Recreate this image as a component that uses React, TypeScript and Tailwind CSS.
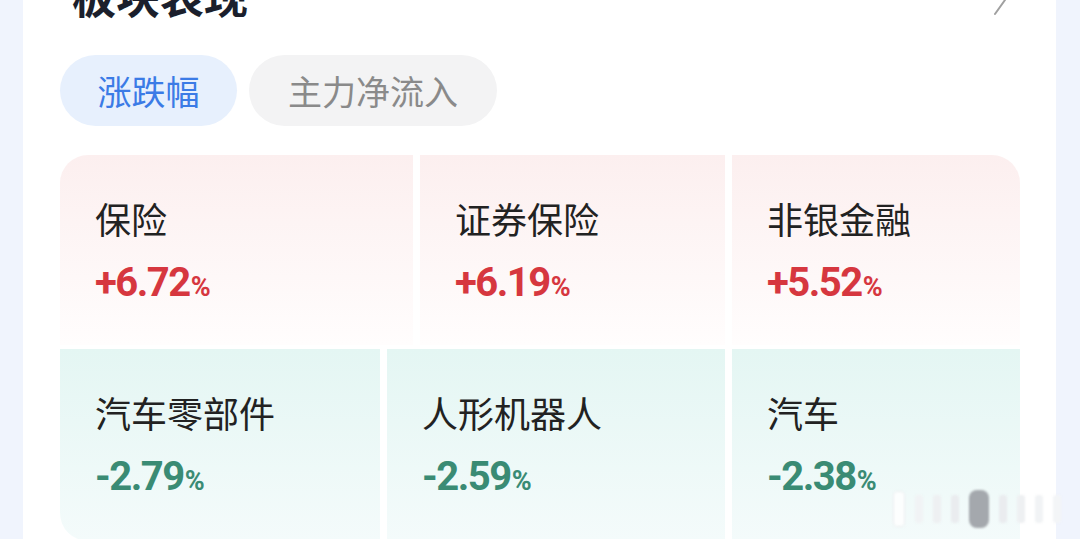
type Sector = { name: string; change: string; width: string; corner?: string }

const gainers: Sector[] = [
  { name: "保险", change: "+6.72", width: "w-[353px]", corner: "rounded-tl-[28px]" },
  { name: "证券保险", change: "+6.19", width: "w-[305px]" },
  { name: "非银金融", change: "+5.52", width: "w-[288px]", corner: "rounded-tr-[28px]" },
]

const losers: Sector[] = [
  { name: "汽车零部件", change: "-2.79", width: "w-[320px]", corner: "rounded-bl-[28px]" },
  { name: "人形机器人", change: "-2.59", width: "w-[338px]" },
  { name: "汽车", change: "-2.38", width: "w-[288px]" },
]

const cjk = "font-['Noto_Sans_CJK_SC','Noto_Sans',sans-serif]"

function SectorCell({ sector, up }: { sector: Sector; up: boolean }) {
  return (
    <div
      className={`${sector.width} ${sector.corner ?? ""} h-full shrink-0 pl-[35px] pt-[45px] ${
        up
          ? "bg-gradient-to-b from-[#fcefef] to-[#fffdfd]"
          : "bg-gradient-to-b from-[#e4f6f3] to-[#f4fbfb]"
      }`}
    >
      <div className={`${cjk} text-[36px] leading-[36px] text-[#222]`}>{sector.name}</div>
      <div
        className={`mt-[27px] flex items-baseline font-['Roboto',sans-serif] font-bold ${
          up ? "text-[#d6373f]" : "text-[#3a8b74]"
        }`}
      >
        <span className="text-[40px] leading-[40px] tracking-[-1.5px]">{sector.change}</span>
        <span className="ml-[1px] text-[27px] leading-[27px]">%</span>
      </div>
    </div>
  )
}

export default function App() {
  return (
    <div className="flex h-[539px] w-[1080px] overflow-hidden bg-[#f0f4fd] pl-[23px] pr-[24px]">
      <div className="relative h-full flex-1 bg-white pl-[37px] pr-[36px]">
        {/* header */}
        <div className="-mt-[27px] flex items-start justify-between">
          <h2 className={`${cjk} pl-[12px] text-[44px] font-bold leading-[44px] text-[#1b1f2c]`}>
            板块表现
          </h2>
          <svg width="14" height="32" viewBox="0 0 14 32" className="mr-[13px] mt-[11px]">
            <polyline
              points="2,2 12,16 2,30"
              fill="none"
              stroke="#a0a0a0"
              strokeWidth="2"
              strokeLinecap="round"
              strokeLinejoin="round"
            />
          </svg>
        </div>

        {/* tabs */}
        <div className={`${cjk} mt-[38px] flex gap-[12px]`}>
          <button className="flex h-[71px] w-[177px] items-center justify-center rounded-full bg-[#e7f0fd] text-[34px] text-[#3b7be6]">
            涨跌幅
          </button>
          <button className="flex h-[71px] w-[248px] items-center justify-center rounded-full bg-[#f3f3f4] text-[34px] text-[#8a8a8a]">
            主力净流入
          </button>
        </div>

        {/* sector grid */}
        <div className="mt-[29px] flex flex-col gap-[4px]">
          <div className="flex h-[190px] gap-[7px]">
            {gainers.map((s) => (
              <SectorCell key={s.name} sector={s} up />
            ))}
          </div>
          <div className="flex h-[192px] gap-[7px]">
            {losers.map((s) => (
              <SectorCell key={s.name} sector={s} up={false} />
            ))}
          </div>
        </div>

        {/* pager dots */}
        <div className="absolute left-[870px] top-[490px] flex items-center gap-[10px] blur-[1px]">
          <div className="h-[36px] w-[12px] rounded-[4px] border border-[#eceef0] bg-white/80" />
          <div className="h-[28px] w-[8px] rounded-[3px] bg-[#f1f3f5]" />
          <div className="h-[28px] w-[8px] rounded-[3px] bg-[#eef0f2]" />
          <div className="h-[28px] w-[8px] rounded-[3px] bg-[#eaecef]" />
          <div className="h-[38px] w-[20px] rounded-[8px] bg-[#a4a8ad]" />
          <div className="h-[28px] w-[8px] rounded-[3px] bg-[#eaecef]" />
          <div className="h-[28px] w-[8px] rounded-[3px] bg-[#eef0f2]" />
          <div className="h-[28px] w-[8px] rounded-[3px] bg-[#f1f3f5]" />
          <div className="h-[28px] w-[8px] rounded-[3px] bg-[#f3f5f7]" />
        </div>
      </div>
    </div>
  )
}
